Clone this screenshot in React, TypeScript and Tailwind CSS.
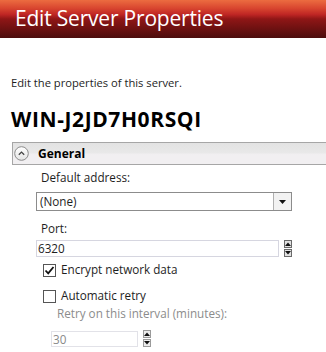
import React from "react";

const font = { fontFamily: '"Open Sans", "Noto Sans", sans-serif' };

function SectionIcon() {
  return (
    <svg width="15" height="15" viewBox="0 0 15 15">
      <defs>
        <linearGradient id="cg" x1="0" y1="0" x2="0" y2="1">
          <stop offset="0" stopColor="#ffffff" />
          <stop offset="1" stopColor="#e4e4e4" />
        </linearGradient>
      </defs>
      <circle cx="7.5" cy="7.5" r="6.8" fill="url(#cg)" stroke="#8a8a8a" strokeWidth="1" />
      <path d="M4.8 8.8 L7.5 6.1 L10.2 8.8" fill="none" stroke="#444" strokeWidth="1.3" />
    </svg>
  );
}

function Spinner({ disabled }: { disabled?: boolean }) {
  const box = disabled
    ? "w-[8px] h-[8px] border border-[#9a9a9a] bg-[#ececec] flex items-center justify-center"
    : "w-[8px] h-[8px] border border-[#6a6a6a] bg-[#e2e2e2] flex items-center justify-center";
  return (
    <div className="flex flex-col gap-[1px] ml-[5px]">
      <div className={box}>
        <svg width="6" height="4" viewBox="0 0 6 4">
          <path d="M0 4 L3 0.5 L6 4 Z" fill="#111" />
        </svg>
      </div>
      <div className={box}>
        <svg width="6" height="4" viewBox="0 0 6 4">
          <path d="M0 0 L3 3.5 L6 0 Z" fill="#111" />
        </svg>
      </div>
    </div>
  );
}

function CheckBox({ checked }: { checked?: boolean }) {
  return (
    <div className="w-[13px] h-[13px] border border-[#555] bg-white flex items-center justify-center">
      {checked && (
        <svg width="11" height="11" viewBox="0 0 11 11">
          <path d="M1.5 5.5 L4.2 8.3 L9.5 2" fill="none" stroke="#111" strokeWidth="1.8" />
        </svg>
      )}
    </div>
  );
}

export default function App() {
  return (
    <div className="w-[326px] h-[352px] overflow-hidden bg-white text-[#1e1e1e]" style={font}>
      <div className="h-[38px] pl-[15px] flex items-center bg-[linear-gradient(to_bottom,#ec6c40_0%,#d8452f_22%,#bf2624_38%,#8f1616_50%,#6e1111_75%,#4c0d0d_100%)]">
        <span className="text-white text-[21px] leading-none tracking-[-0.2px] pb-[2px]">Edit Server Properties</span>
      </div>

      <div className="pl-[11px]">
        <div className="mt-[37px] text-[11.2px] leading-[16px]">Edit the properties of this server.</div>
        <div className="mt-[16px] text-[21px] font-bold leading-[24px] tracking-[0.6px] text-black">WIN-J2JD7H0RSQI</div>

        <div className="mt-[11px] ml-[1px] h-[23px] border-y border-l border-[#a6a6a6] bg-[linear-gradient(to_bottom,#e3e3e3_0%,#e8e8e8_45%,#f1eff1_55%,#f1eff1_100%)] flex items-center pl-[1px]">
          <SectionIcon />
          <span className="ml-[9px] text-[12px] font-bold text-black">General</span>
        </div>

        <div className="pl-[25px] text-[11.7px]">
          <div className="mt-[3px] pl-[5px] leading-[18px]">Default address:</div>
          <div className="mt-[6px] w-[256px] h-[19px] border border-[#8c8c8c] flex">
            <div className="flex-1 pl-[3px] leading-[17px]">(None)</div>
            <div className="w-[18px] border-l border-[#b0b0b0] bg-[#f2f2f2] flex items-center justify-center">
              <svg width="7" height="4" viewBox="0 0 7 4">
                <path d="M0 0 L7 0 L3.5 4 Z" fill="#111" />
              </svg>
            </div>
          </div>

          <div className="mt-[8px] pl-[5px] leading-[18px]">Port:</div>
          <div className="mt-[3px] flex items-center">
            <div className="w-[243px] h-[17px] border border-[#d6d6e0] pl-[1px] leading-[15px]">6320</div>
            <Spinner />
          </div>

          <div className="mt-[6px] ml-[7px] flex items-center h-[14px]">
            <CheckBox checked />
            <span className="ml-[5px]">Encrypt network data</span>
          </div>
          <div className="mt-[12px] ml-[7px] flex items-center h-[14px]">
            <CheckBox />
            <span className="ml-[5px]">Automatic retry</span>
          </div>

          <div className="ml-[15px]">
            <div className="mt-[1px] pl-[6px] leading-[18px] text-[#8c8c8c]">Retry on this interval (minutes):</div>
            <div className="mt-[8px] flex items-center">
              <div className="w-[87px] h-[16px] border border-[#e2e2e8] pl-[1px] leading-[14px] text-[#8a8a8a]">30</div>
              <Spinner disabled />
            </div>
          </div>
        </div>
      </div>
    </div>
  );
}
